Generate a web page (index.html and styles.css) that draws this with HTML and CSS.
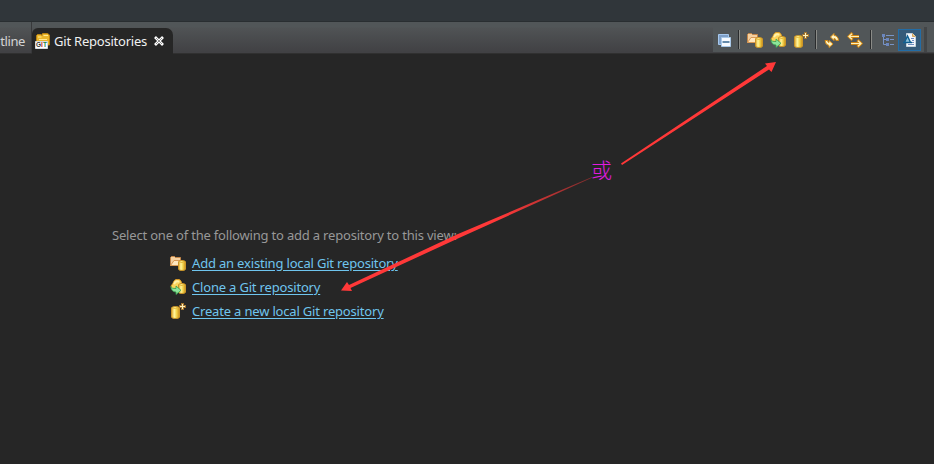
FILE: index.html
```
<!DOCTYPE html>
<html lang="en">
<head>
<meta charset="utf-8">
<title>Git Repositories</title>
<link rel="stylesheet" href="styles.css">
</head>
<body>
<svg class="defs" width="0" height="0" aria-hidden="true">
  <defs>
    <linearGradient id="gold"><stop offset="0" stop-color="#dca020"/><stop offset=".35" stop-color="#fff6a0"/><stop offset=".65" stop-color="#f2d248"/><stop offset="1" stop-color="#c88a18"/></linearGradient>
    <linearGradient id="fade" gradientUnits="userSpaceOnUse" x1="592" y1="177" x2="500" y2="216"><stop offset="0" stop-color="#ff3838" stop-opacity=".4"/><stop offset="1" stop-color="#ff3838"/></linearGradient>
    <symbol id="cylinder" viewBox="0 0 8 11"><path d="M.5 2Q.5.5 4 .5T7.500 2V9Q7.500 10.500 4 10.500T.5 9Z" fill="url(#gold)" stroke="#c99428"/><path d="M1.500 2Q4 3.200 6.500 2" fill="none" stroke="#e8bc40"/></symbol>
    <symbol id="existing" viewBox="0 0 16 16"><path d="M.5 10.500V2.500L1.500 1.500H4.500L5.500 2.500H10.500V5.500" fill="#f4d0a0" stroke="#c48648"/><path d="M.5 10.500L4 5.500H12L9 10.500Z" fill="#ffe7be" stroke="#d99a55"/><use href="#cylinder" x="8" y="5" width="8" height="11"/></symbol>
    <symbol id="clone" viewBox="0 0 16 16"><path d="M2.500 10Q-.5 7 3 4.500Q4 0 7.500 .5Q11 0 11.500 4Q14 5 13 9Z" fill="#fbd45c" stroke="#dc9b24"/><path d="M4 5Q6 1 9 3" fill="none" stroke="#fff0a8" stroke-width="2"/><use href="#cylinder" x="8" y="4" width="8" height="11"/><path d="M.8 7.500Q2 10 6 9.500V7L11 11.300L6 15.500V13Q1.500 13 .8 7.500Z" fill="#8de49a" stroke="#39a050" stroke-width=".8"/></symbol>
    <symbol id="create" viewBox="0 0 16 16"><path d="M1.500 5Q1.500 3.500 5.500 3.500T9.500 5V14Q9.500 15.500 5.500 15.500T1.500 14Z" fill="url(#gold)" stroke="#c99428"/><path d="M2.500 5Q5.500 6 8.500 5" fill="none" stroke="#e8bc40"/><path d="M12.500 0V7M9 3.500H16" stroke="#a37530" stroke-width="3"/><path d="M12.500 1V6M10 3.500H15" stroke="#fff2bd"/></symbol>
  </defs>
</svg>
<header class="window-strip"></header>
<nav class="tabbar">
  <div class="tab previous">utline</div>
  <div class="tab active">
    <svg class="icon" viewBox="0 0 16 16"><path d="M1.500 8V2.500L2.500 1.500H6L7 2.500V1L8 .5H12.500L14.500 2V12H2Z" fill="#eab62b" stroke="#b98212"/><path d="M3 4H6.500M8.500 2.500H13M4 6.500H12" stroke="#ffe994"/><path d="M.5 8.500H12.500V15.500H.5Z" fill="#fff" stroke="#d7dcdf"/><text y="14.300" class="git"><tspan x=".9" fill="#333">G</tspan><tspan x="5.900" fill="#c22a30">I</tspan><tspan x="8" fill="#22884b">T</tspan></text></svg>
    <span class="title">Git Repositories</span>
    <svg class="close" viewBox="0 0 10 10"><path d="M1 1L9 9M9 1L1 9" stroke="#fff" stroke-width="2.700"/><path d="M2 2L8 8M8 2L2 8" stroke="#222"  stroke-width=".5"/></svg>
  </div>
  <div class="toolbar">
    <svg class="icon collapse" viewBox="0 0 16 16"><path d="M2.500 12.500V2.500H12.500V12.500Z" fill="#7fa0c8" stroke="#a6c8ee"/><path d="M5.500 5.500H14.500V14.500H5.500Z" fill="#f7fbff" stroke="#a9c9e9"/><path d="M6.500 10H13.500" stroke="#174e7d" stroke-width="1.300"/></svg>
    <i class="separator"></i>
    <svg class="icon t1"><use href="#existing"/></svg>
    <svg class="icon t2"><use href="#clone"/></svg>
    <svg class="icon t3"><use href="#create"/></svg>
    <i class="separator s2"></i>
    <svg class="icon t4" viewBox="0 0 16 16"><g fill="#fff4c4" stroke="#d88d13"><path d="M6.500 5L10 1.500V3.500Q14 3.500 14.500 8.500H12Q12 6.500 10 6.500V8.500Z"/><path d="M1 8.500H3.500Q3.500 10 5 10.500V8.500L9 12L5 15.500V13.500Q1.500 13 1 8.500Z"/></g></svg>
    <svg class="icon t5" viewBox="0 0 16 16"><g fill="none"><path d="M12 4.500H2M5.500 1L2 4.500L5.500 8M4 11.500H14M10.500 8L14 11.500L10.500 15" stroke="#cf8615" stroke-width="3"/><path d="M12 4.500H2M5 1.800L2 4.500L5 7.200M4 11.500H14M11 8.800L14 11.500L11 14.200" stroke="#fff1b8" stroke-width="1.200"/></g></svg>
    <i class="separator s3"></i>
    <svg class="icon t6" viewBox="0 0 16 16"><path d="M4.500 5V12.500H7M4.500 7.500H7M7 3.500H15M11 7.500H15M11 12.500H15" fill="none" stroke="#7894c6"/><path d="M3 2H6V5H3ZM7 6H10V9H7ZM7 11H10V14H7Z" fill="#6b86bd"/></svg>
    <span class="selected"><svg class="icon" viewBox="0 0 16 16"><path d="M4.500 1.500H10.500L13.500 4.500V14.500H4.500Z" fill="#f5f8fc" stroke="#c7d3dc"/><path d="M10.500 1.500V4.500H13.500" fill="#f1c57a" stroke="#d4a660"/><path d="M9 6.500H12M10 8.500H12M10 10.500H12M6 12.500H12" stroke="#718dc0"/><path d="M2.500 10.500L5.500 4L8.500 10.500ZM1 10.500H10" fill="#8fc0d9" stroke="#105f91" stroke-width="1.400"/></svg></span>
    <i class="tool-end"></i>
  </div>
</nav>
<main class="view">
  <p class="prompt">Select one of the following to add a repository to this view:</p>
  <ul class="actions">
    <li><svg class="icon"><use href="#existing"/></svg><a>Add an existing local Git repository</a></li>
    <li><svg class="icon"><use href="#clone"/></svg><a>Clone a Git repository</a></li>
    <li><svg class="icon"><use href="#create"/></svg><a>Create a new local Git repository</a></li>
  </ul>
</main>
<svg class="annotations" viewBox="0 0 934 464">
  <path d="M622 165L769 69.500L771.500 72L776 62L765 63.500L767 66L621 163.500Z" fill="#ff3838"/>
  <path d="M592 177L458 234L349 285L347 282L341 290.500L352 291L350.500 288L459 238L592 177.700Z" fill="url(#fade)"/>
</svg>
<span class="or" lang="zh">或</span>
</body>
</html>
```

FILE: styles.css
```
* { box-sizing: border-box; }
body { margin: 0; width: 934px; height: 464px; overflow: hidden; background: #262626; font: 13px/20px "Noto Sans", "Noto Sans CJK SC", sans-serif; }
.defs { position: absolute; }
.icon { display: block; width: 16px; height: 16px; flex: none; }
.window-strip { height: 22px; background: #30363a; border-bottom: 1px solid #292e31; }
.tabbar { height: 32px; display: flex; align-items: flex-start; background: linear-gradient(#515658 0 5px, #505355 6px, #414144 30px); border-bottom: 1px solid #303030; }
.tab { color: #d4d4d4; white-space: nowrap; }
.previous { width: 32px; height: 31px; padding: 9px 6px 0 0; display: flex; justify-content: flex-end; letter-spacing: -.4px; overflow: hidden; border-right: 1px solid #38393b; }
.active { width: 141px; height: 31px; margin-top: 6px; padding: 5px 0 0 3px; display: flex; background: #262626; border-radius: 6px 7px 0 0; color: #f0f0f0; }
.active .title { width: 98px; margin: -2px 0 0 3px; letter-spacing: -.22px; }
.close { width: 10px; height: 10px; margin: 3px 0 0 2px; }
.git { font: bold 6.500px "Liberation Sans", sans-serif; }
.toolbar { margin: 5px 0 0 auto; width: 221px; height: 25px; display: flex; align-items: center; background: #515658; }
.collapse { margin-left: 3px; }
.separator { width: 2px; height: 19px; flex: none; margin-left: 6px; background: #8a8b87; border-left: 1px solid #2a2c2d; }
.t1 { margin-left: 7px; }
.t2, .t3 { margin-left: 7px; }
.s2 { margin-left: 6px; }
.t4 { margin-left: 7px; }
.t5 { margin-left: 7px; }
.s3 { margin-left: 7px; }
.t6 { margin-left: 7px; }
.selected { width: 23px; height: 22px; margin-left: 3px; padding: 2px 3px; background: #365b79; border: 1px solid #236ca5; flex: none; }
.tool-end { width: 3px; height: 25px; flex: none; margin-left: 3px; background: #424547; }
.view { padding: 171px 0 0 112px; }
.prompt { margin: 0; color: #989898; white-space: nowrap; letter-spacing: -.19px; }
.actions { list-style: none; margin: 6px 0 0 58px; padding: 0; }
.actions li { display: flex; align-items: center; gap: 6px; height: 24px; }
.actions a { color: #6fc5ee; letter-spacing: -.18px; text-decoration: underline; text-underline-offset: 2px; white-space: nowrap; }
.annotations { position: absolute; inset: 0; width: 934px; height: 464px; }
.or { position: absolute; left: 591px; top: 155px; color: #e01be0; font: 300 21px/28px "Noto Sans CJK SC", sans-serif; }
```
